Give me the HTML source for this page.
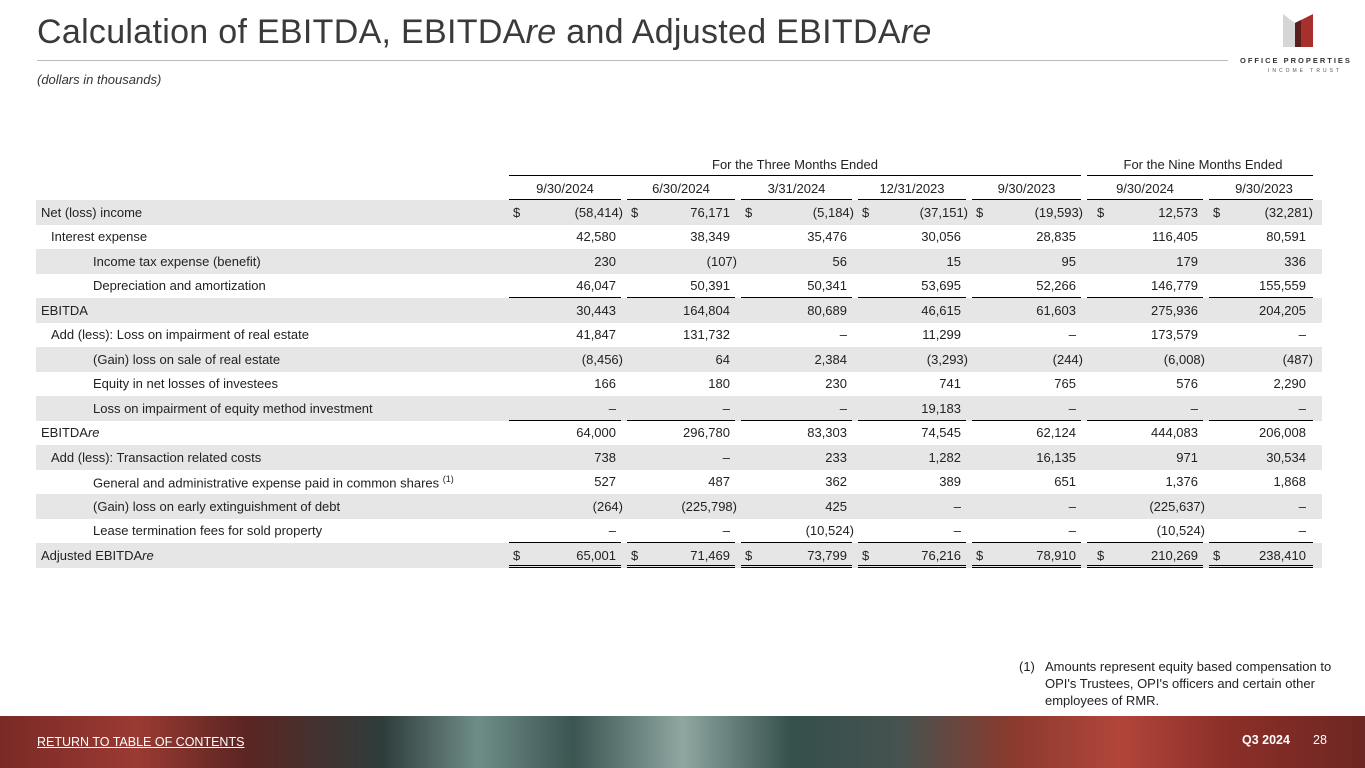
<!DOCTYPE html>
<html><head><meta charset="utf-8"><style>
*{margin:0;padding:0;box-sizing:border-box}
body{width:1365px;height:768px;position:relative;background:#fff;font-family:"Liberation Sans",sans-serif;color:#222;overflow:hidden}
.t{position:absolute;left:37px;top:13px;font-size:34px;color:#3a3a3a;letter-spacing:0.3px}
.hr{position:absolute;left:37px;top:60px;width:1191px;height:1px;background:#bbb}
.sub{position:absolute;left:37px;top:72px;font-size:13px;font-style:italic;color:#333}
table{position:absolute;left:36px;top:152px;border-collapse:collapse;table-layout:fixed;font-size:13px}
td{height:24.5px;padding:0;vertical-align:middle;position:relative;white-space:nowrap}
tr.s td{background:#e6e6e6}
td.n{text-align:right;padding-right:8px}
td.n.p{padding-right:1px}
td.c7.n{padding-right:16px}td.c7.n.p{padding-right:9px}
.u{position:absolute;left:3px;right:3px;bottom:0;border-bottom:1px solid #000}
td.c7 .u{right:9px}
.d{position:absolute;left:7px;top:5px}
td.c6 .d{left:13px}
.l1{padding-left:5px}.l2{padding-left:15px}.l3{padding-left:57px}
.hd td{text-align:center;height:24px}
.foot{position:absolute;left:1019px;top:658px;font-size:13px;line-height:17px;color:#222}
.band{position:absolute;left:0;top:716px;width:1365px;height:52px;background:linear-gradient(90deg,#7a2a26 0%,#9b3a33 10%,#5b2522 18%,#2e3d3b 28%,#6f8d88 35%,#3b5552 42%,#8fa6a1 50%,#35504c 58%,#46524f 66%,#8a3a2e 74%,#b2453a 82%,#8b2f28 90%,#6e2622 100%)}
.rt{position:absolute;left:37px;top:735px;font-size:12.5px;color:#fff;text-decoration:underline}
.q{position:absolute;left:1242px;top:733px;font-size:12.5px;color:#fff;font-weight:bold}
.pg{position:absolute;left:1313px;top:733px;font-size:12.5px;color:#fff}
</style></head><body>
<div class="t">Calculation of EBITDA, EBITDA<i>re</i> and Adjusted EBITDA<i>re</i></div>
<div class="hr"></div>
<div class="sub">(dollars in thousands)</div>
<svg style="position:absolute;left:1283px;top:14px" width="30" height="33"><polygon points="0,0 12,9 12,33 0,33" fill="#d6d6d6"/><polygon points="12,9 30,0 30,33 12,33" fill="#a8302c"/><polygon points="12,9 18,6 18,33 12,33" fill="#5a1e1c"/></svg>
<div style="position:absolute;left:1240px;top:56px;font-size:7.5px;letter-spacing:2px;color:#333;font-weight:bold">OFFICE PROPERTIES</div>
<div style="position:absolute;left:1268px;top:68px;font-size:5px;letter-spacing:3px;color:#555">INCOME TRUST</div>
<table>
<colgroup><col style="width:470px"><col style="width:118px"><col style="width:114px"><col style="width:117px"><col style="width:114px"><col style="width:115px"><col style="width:122px"><col style="width:116px"></colgroup>
<tr class="hd"><td></td><td colspan="5">For the Three Months Ended<div class="u"></div></td><td colspan="2" class="c7">For the Nine Months Ended<div class="u"></div></td></tr>
<tr class="hd"><td></td><td>9/30/2024<div class="u"></div></td><td>6/30/2024<div class="u"></div></td><td>3/31/2024<div class="u"></div></td><td>12/31/2023<div class="u"></div></td><td>9/30/2023<div class="u"></div></td><td class="c6">9/30/2024<div class="u"></div></td><td class="c7">9/30/2023<div class="u"></div></td></tr>
<tr class="s"><td class="l1">Net (loss) income</td><td class="n p"><span class="d">$</span>(58,414)</td><td class="n"><span class="d">$</span>76,171</td><td class="n p"><span class="d">$</span>(5,184)</td><td class="n p"><span class="d">$</span>(37,151)</td><td class="n p"><span class="d">$</span>(19,593)</td><td class="n c6"><span class="d">$</span>12,573</td><td class="n p c7"><span class="d">$</span>(32,281)</td></tr>
<tr><td class="l2">Interest expense</td><td class="n">42,580</td><td class="n">38,349</td><td class="n">35,476</td><td class="n">30,056</td><td class="n">28,835</td><td class="n c6">116,405</td><td class="n c7">80,591</td></tr>
<tr class="s"><td class="l3">Income tax expense (benefit)</td><td class="n">230</td><td class="n p">(107)</td><td class="n">56</td><td class="n">15</td><td class="n">95</td><td class="n c6">179</td><td class="n c7">336</td></tr>
<tr><td class="l3">Depreciation and amortization</td><td class="n">46,047<div class="u"></div></td><td class="n">50,391<div class="u"></div></td><td class="n">50,341<div class="u"></div></td><td class="n">53,695<div class="u"></div></td><td class="n">52,266<div class="u"></div></td><td class="n c6">146,779<div class="u"></div></td><td class="n c7">155,559<div class="u"></div></td></tr>
<tr class="s"><td class="l1">EBITDA</td><td class="n">30,443</td><td class="n">164,804</td><td class="n">80,689</td><td class="n">46,615</td><td class="n">61,603</td><td class="n c6">275,936</td><td class="n c7">204,205</td></tr>
<tr><td class="l2">Add (less): Loss on impairment of real estate</td><td class="n">41,847</td><td class="n">131,732</td><td class="n">–</td><td class="n">11,299</td><td class="n">–</td><td class="n c6">173,579</td><td class="n c7">–</td></tr>
<tr class="s"><td class="l3">(Gain) loss on sale of real estate</td><td class="n p">(8,456)</td><td class="n">64</td><td class="n">2,384</td><td class="n p">(3,293)</td><td class="n p">(244)</td><td class="n p c6">(6,008)</td><td class="n p c7">(487)</td></tr>
<tr><td class="l3">Equity in net losses of investees</td><td class="n">166</td><td class="n">180</td><td class="n">230</td><td class="n">741</td><td class="n">765</td><td class="n c6">576</td><td class="n c7">2,290</td></tr>
<tr class="s"><td class="l3">Loss on impairment of equity method investment</td><td class="n">–<div class="u"></div></td><td class="n">–<div class="u"></div></td><td class="n">–<div class="u"></div></td><td class="n">19,183<div class="u"></div></td><td class="n">–<div class="u"></div></td><td class="n c6">–<div class="u"></div></td><td class="n c7">–<div class="u"></div></td></tr>
<tr><td class="l1">EBITDA<i>re</i></td><td class="n">64,000</td><td class="n">296,780</td><td class="n">83,303</td><td class="n">74,545</td><td class="n">62,124</td><td class="n c6">444,083</td><td class="n c7">206,008</td></tr>
<tr class="s"><td class="l2">Add (less): Transaction related costs</td><td class="n">738</td><td class="n">–</td><td class="n">233</td><td class="n">1,282</td><td class="n">16,135</td><td class="n c6">971</td><td class="n c7">30,534</td></tr>
<tr><td class="l3">General and administrative expense paid in common shares <sup style="font-size:9px">(1)</sup></td><td class="n">527</td><td class="n">487</td><td class="n">362</td><td class="n">389</td><td class="n">651</td><td class="n c6">1,376</td><td class="n c7">1,868</td></tr>
<tr class="s"><td class="l3">(Gain) loss on early extinguishment of debt</td><td class="n p">(264)</td><td class="n p">(225,798)</td><td class="n">425</td><td class="n">–</td><td class="n">–</td><td class="n p c6">(225,637)</td><td class="n c7">–</td></tr>
<tr><td class="l3">Lease termination fees for sold property</td><td class="n">–<div class="u"></div></td><td class="n">–<div class="u"></div></td><td class="n p">(10,524)<div class="u"></div></td><td class="n">–<div class="u"></div></td><td class="n">–<div class="u"></div></td><td class="n p c6">(10,524)<div class="u"></div></td><td class="n c7">–<div class="u"></div></td></tr>
<tr class="s"><td class="l1">Adjusted EBITDA<i>re</i></td><td class="n"><span class="d">$</span>65,001<div class="u" style="border-bottom:3px double #000"></div></td><td class="n"><span class="d">$</span>71,469<div class="u" style="border-bottom:3px double #000"></div></td><td class="n"><span class="d">$</span>73,799<div class="u" style="border-bottom:3px double #000"></div></td><td class="n"><span class="d">$</span>76,216<div class="u" style="border-bottom:3px double #000"></div></td><td class="n"><span class="d">$</span>78,910<div class="u" style="border-bottom:3px double #000"></div></td><td class="n c6"><span class="d">$</span>210,269<div class="u" style="border-bottom:3px double #000"></div></td><td class="n c7"><span class="d">$</span>238,410<div class="u" style="border-bottom:3px double #000"></div></td></tr>
</table>
<div class="foot"><span style="position:absolute;left:0">(1)</span><div style="padding-left:26px;width:326px">Amounts represent equity based compensation to OPI's Trustees, OPI's officers and certain other employees of RMR.</div></div>
<div class="band"></div>
<div class="rt">RETURN TO TABLE OF CONTENTS</div>
<div class="q">Q3 2024</div><div class="pg">28</div>
</body></html>
